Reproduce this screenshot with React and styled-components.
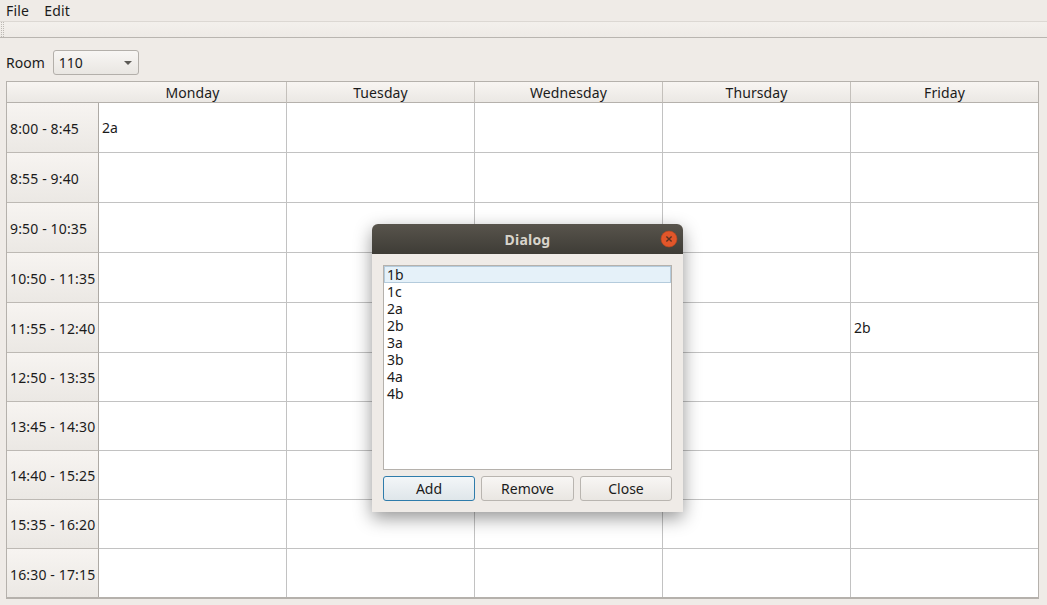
import React from 'react';
import styled, { createGlobalStyle } from 'styled-components';

const GlobalStyle = createGlobalStyle`
  html, body {
    margin: 0;
    padding: 0;
    height: 605px;
    overflow: hidden;
    background: #efebe7;
  }
  body {
    font-family: "Noto Sans", "Open Sans", sans-serif;
    font-size: 14px;
    color: #1b1b1b;
  }
`;

const Window = styled.div`
  position: relative;
  width: 1047px;
  height: 605px;
  background: #efebe7;
  overflow: hidden;
`;

const MenuBar = styled.div`
  display: flex;
  height: 21px;
  align-items: center;
  padding-left: 6px;
  gap: 15px;
  line-height: 21px;
  letter-spacing: 0.2px;
`;

const ToolBar = styled.div`
  height: 15px;
  border-top: 1px solid #dcd8d3;
  border-bottom: 1px solid #b9b5b0;
  background: linear-gradient(#f3f0ec, #eeeae6);
`;

const Grip = styled.div`
  width: 4px;
  height: 15px;
  background-image: conic-gradient(#bdb9b4 25%, transparent 0);
  background-size: 2px 2px;
`;

const RoomRow = styled.div`
  display: flex;
  align-items: center;
  gap: 8px;
  height: 25px;
  margin: 12px 0 6px 6px;
`;

const ComboBox = styled.div`
  width: 86px;
  height: 25px;
  box-sizing: border-box;
  display: flex;
  align-items: center;
  justify-content: space-between;
  padding: 0 6px 0 5px;
  border: 1px solid #b3afaa;
  border-radius: 3px;
  background: linear-gradient(#f8f6f4, #e9e6e2);
`;

const Arrow = styled.span`
  width: 0;
  height: 0;
  border-left: 4px solid transparent;
  border-right: 4px solid transparent;
  border-top: 4px solid #5c5a56;
`;

const Table = styled.div`
  display: grid;
  width: 1033px;
  box-sizing: border-box;
  margin-left: 6px;
  border: 1px solid #b5b1ac;
  border-bottom: 2px solid #b5b1ac;
  grid-template-columns: 92px repeat(4, 188px) 187px;
  grid-template-rows: 21px repeat(5, 50px) repeat(4, 49px) 48px;
  background: #fff;
`;

const HeaderCell = styled.div`
  display: flex;
  align-items: center;
  justify-content: center;
  box-sizing: border-box;
  padding-top: 1px;
  letter-spacing: 0.1px;
  border-bottom: 1px solid #b5b1ac;
  border-right: ${(p) => (p.$last ? 'none' : '1px solid #c4c0bb')};
  background: linear-gradient(#f8f5f2, #ebe8e4);
`;

const Corner = styled(HeaderCell)`
  border-right: none;
`;

const TimeCell = styled.div`
  display: flex;
  align-items: center;
  box-sizing: border-box;
  padding-left: 3px;
  padding-top: ${(p) => (p.$short ? 1 : 2)}px;
  white-space: nowrap;
  letter-spacing: 0.15px;
  border-bottom: ${(p) => (p.$last ? 'none' : '1px solid #bdb9b4')};
  border-right: 1px solid #aeaaa5;
  background: linear-gradient(#f7f4f1, #ebe8e4);
`;

const Cell = styled.div`
  display: flex;
  align-items: center;
  box-sizing: border-box;
  padding-left: 3px;
  padding-bottom: 1px;
  border-bottom: ${(p) => (p.$lastRow ? 'none' : '1px solid #c2c2c2')};
  border-right: ${(p) => (p.$lastCol ? 'none' : '1px solid #c2c2c2')};
`;

const Dialog = styled.div`
  position: absolute;
  left: 372px;
  top: 224px;
  width: 311px;
  height: 288px;
  background: #efebe7;
  border-radius: 6px 6px 0 0;
  box-shadow: 0 6px 18px rgba(0, 0, 0, 0.42);
  display: flex;
  flex-direction: column;
`;

const TitleBar = styled.div`
  position: relative;
  height: 30px;
  flex: none;
  display: flex;
  align-items: center;
  justify-content: center;
  border-radius: 6px 6px 0 0;
  background: linear-gradient(#58544c, #3e3c36);
  color: #d8d4cb;
  font-weight: 700;
  font-size: 14px;
  letter-spacing: 0.2px;
`;

const CloseDot = styled.svg`
  position: absolute;
  right: 5px;
  top: 6px;
`;

const DialogBody = styled.div`
  display: flex;
  flex-direction: column;
  padding: 11px 11px 12px;
  gap: 6px;
`;

const List = styled.div`
  height: 205px;
  box-sizing: border-box;
  border: 1px solid #b5b1ac;
  background: #fff;
`;

const ListItem = styled.div`
  height: 17px;
  line-height: 17px;
  box-sizing: border-box;
  padding-left: 3px;
  ${(p) =>
    p.$selected &&
    `
    line-height: 15px;
    padding-left: 2px;
    background: #e5f1f9;
    border: 1px solid #b4cbdc;
  `}
`;

const ButtonRow = styled.div`
  display: flex;
  justify-content: space-between;
`;

const Button = styled.button`
  width: ${(p) => p.$width}px;
  height: 25px;
  padding: 0;
  font: inherit;
  color: inherit;
  border-radius: 3px;
  border: 1px solid ${(p) => (p.$focused ? '#2f7cab' : '#b9b5b0')};
  background: ${(p) =>
    p.$focused
      ? 'linear-gradient(#f3f6f8, #dfe6ea)'
      : 'linear-gradient(#f8f6f4, #e9e6e2)'};
`;

const days = ['Monday', 'Tuesday', 'Wednesday', 'Thursday', 'Friday'];

const slots = [
  '8:00 - 8:45',
  '8:55 - 9:40',
  '9:50 - 10:35',
  '10:50 - 11:35',
  '11:55 - 12:40',
  '12:50 - 13:35',
  '13:45 - 14:30',
  '14:40 - 15:25',
  '15:35 - 16:20',
  '16:30 - 17:15',
];

// lessons keyed by "row-column"
const lessons = { '0-0': '2a', '4-4': '2b' };

const classes = ['1b', '1c', '2a', '2b', '3a', '3b', '4a', '4b'];

const App = () => (
  <Window>
    <GlobalStyle />
    <MenuBar>
      <span>File</span>
      <span>Edit</span>
    </MenuBar>
    <ToolBar>
      <Grip />
    </ToolBar>
    <RoomRow>
      <span>Room</span>
      <ComboBox>
        <span>110</span>
        <Arrow />
      </ComboBox>
    </RoomRow>
    <Table>
      <Corner />
      {days.map((day, i) => (
        <HeaderCell key={day} $last={i === days.length - 1}>
          {day}
        </HeaderCell>
      ))}
      {slots.map((slot, row) => (
        <React.Fragment key={slot}>
          <TimeCell $last={row === slots.length - 1} $short={row >= 5 && row < 9}>
            {slot}
          </TimeCell>
          {days.map((day, col) => (
            <Cell
              key={day}
              $lastRow={row === slots.length - 1}
              $lastCol={col === days.length - 1}
            >
              {lessons[`${row}-${col}`]}
            </Cell>
          ))}
        </React.Fragment>
      ))}
    </Table>
    <Dialog>
      <TitleBar>
        Dialog
        <CloseDot width="18" height="18" viewBox="0 0 18 18">
          <circle cx="9" cy="9" r="8" fill="#e2562a" stroke="#b5441f" strokeWidth="0.6" />
          <path d="M6.4 6.4l5.2 5.2M11.6 6.4l-5.2 5.2" stroke="#5a3222" strokeWidth="1.4" />
        </CloseDot>
      </TitleBar>
      <DialogBody>
        <List>
          {classes.map((c, i) => (
            <ListItem key={c} $selected={i === 0}>
              {c}
            </ListItem>
          ))}
        </List>
        <ButtonRow>
          <Button $width={92} $focused>Add</Button>
          <Button $width={93}>Remove</Button>
          <Button $width={92}>Close</Button>
        </ButtonRow>
      </DialogBody>
    </Dialog>
  </Window>
);

export default App;
